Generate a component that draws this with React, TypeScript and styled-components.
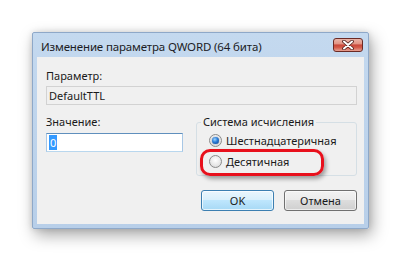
import styled, { createGlobalStyle } from "styled-components"

const GlobalStyle = createGlobalStyle`
    html, body {
        margin: 0;
        background: #ffffff;
    }
    body {
        font-family: "Noto Sans", "DejaVu Sans", sans-serif;
        color: #1a1a1a;
    }
`

const Page = styled.div`
    width: 401px;
    height: 261px;
    padding: 32px 0 0 32px;
    box-sizing: border-box;
    overflow: hidden;
`

const Window = styled.div`
    width: 337px;
    box-sizing: border-box;
    border: 1px solid #8ea8c8;
    border-radius: 2px;
    background: linear-gradient(#c4d9ef, #b8cfe9);
    padding: 0 4px 4px 4px;
    box-shadow: 3px 6px 16px rgba(0, 0, 0, 0.35), 0 0 6px rgba(0, 0, 0, 0.12);
`

const TitleBar = styled.div`
    height: 24px;
    display: flex;
    align-items: center;
    justify-content: space-between;
    padding-left: 4px;
`

const Title = styled.span`
    font-size: 11.5px;
    letter-spacing: -0.15px;
    padding-top: 3px;
    color: #1c1c24;
`

const CloseButton = styled.div`
    width: 30px;
    height: 14px;
    margin-right: 1px;
    box-sizing: border-box;
    border: 1px solid #6b2a24;
    border-radius: 3px;
    background: linear-gradient(#eab4a8 0%, #e29484 40%, #c9473a 50%, #d35a48 70%, #e7a193 100%);
    display: flex;
    align-items: center;
    justify-content: center;
`

const Client = styled.div`
    position: relative;
    height: 167px;
    box-sizing: border-box;
    background: #f0f0f0;
    padding: 11px 7px 0 9px;
    font-size: 11px;
`

const Label = styled.div`
    line-height: 16px;
    height: 16px;
`

const Field = styled.div<{ $readOnly?: boolean }>`
    height: 19px;
    box-sizing: border-box;
    border: 1px solid;
    border-color: ${p => p.$readOnly ? "#d2d2d2" : "#5f8fbd #a8c7e5 #b9d7ee #a8c7e5"};
    background: ${p => p.$readOnly ? "#f0f0f0" : "#ffffff"};
    display: flex;
    align-items: center;
    padding-left: 2px;
    margin-top: ${p => p.$readOnly ? "2px" : "3px"};
`

const Selected = styled.span`
    background: #3399ff;
    color: #ffffff;
    padding: 0 1px;
    line-height: 15px;
`

const Row = styled.div`
    display: flex;
    align-items: flex-start;
    margin-top: 9px;
`

const ValueColumn = styled.div`
    width: 137px;
`

const Group = styled.fieldset`
    margin: 0 0 0 13px;
    width: 161px;
    box-sizing: border-box;
    border: 1px solid #d5dfe5;
    border-radius: 3px;
    padding: 0 6px 3px 12px;
`

const Legend = styled.legend`
    margin-left: -8px;
    padding: 0 2px;
    line-height: 16px;
`

const RadioRow = styled.div`
    height: 21px;
    display: flex;
    align-items: center;
    gap: 4px;
`

const Radio = styled.span<{ $checked?: boolean }>`
    width: 13px;
    height: 13px;
    box-sizing: border-box;
    border-radius: 50%;
    border: 1px solid #8b8b8b;
    background: radial-gradient(circle at 50% 40%, #ffffff 0%, #e6e6e6 60%, #cfcfcf 100%);
    display: flex;
    align-items: center;
    justify-content: center;

    &::after {
        content: "";
        display: ${p => p.$checked ? "block" : "none"};
        width: 7px;
        height: 7px;
        border-radius: 50%;
        background: radial-gradient(circle at 40% 35%, #9bd4ff 0%, #2a7bd6 45%, #0d3f8a 100%);
        box-shadow: 0 0 1px #0b3570;
    }
`

const Buttons = styled.div`
    display: flex;
    justify-content: flex-end;
    gap: 10px;
    margin-top: 14px;
`

const Button = styled.div<{ $primary?: boolean }>`
    width: 73px;
    height: 21px;
    box-sizing: border-box;
    border: 1px solid ${p => p.$primary ? "#3c7fb1" : "#707070"};
    border-radius: 3px;
    background: ${p => p.$primary
        ? "linear-gradient(#eaf6fd 0%, #d9f0fc 45%, #bee6fd 50%, #a7d9f5 100%)"
        : "linear-gradient(#f2f2f2 0%, #ebebeb 45%, #dddddd 50%, #cfcfcf 100%)"};
    box-shadow: inset 0 0 0 1px ${p => p.$primary ? "rgba(255,255,255,0.7)" : "rgba(255,255,255,0.6)"};
    display: flex;
    align-items: center;
    justify-content: center;
`

const Highlight = styled.div`
    position: absolute;
    left: 163px;
    top: 92px;
    width: 124px;
    height: 27px;
    box-sizing: border-box;
    border: 3.5px solid #e8101c;
    border-radius: 10px;
    box-shadow: 2px 3px 4px rgba(0, 0, 0, 0.35);
`

const App = () => {
    return (
        <Page>
            <GlobalStyle />
            <Window>
                <TitleBar>
                    <Title>Изменение параметра QWORD (64 бита)</Title>
                    <CloseButton>
                        <svg width="12" height="10" viewBox="0 0 12 10">
                            <path d="M2 1.5 L10 8.5 M10 1.5 L2 8.5" stroke="#4a1a16" strokeWidth="3.6" strokeLinecap="round" />
                            <path d="M2 1.5 L10 8.5 M10 1.5 L2 8.5" stroke="#ffffff" strokeWidth="2" strokeLinecap="round" />
                        </svg>
                    </CloseButton>
                </TitleBar>
                <Client>
                    <Label>Параметр:</Label>
                    <Field $readOnly>DefaultTTL</Field>
                    <Row>
                        <ValueColumn>
                            <Label>Значение:</Label>
                            <Field>
                                <Selected>0</Selected>
                            </Field>
                        </ValueColumn>
                        <Group>
                            <Legend>Система исчисления</Legend>
                            <RadioRow>
                                <Radio $checked />
                                Шестнадцатеричная
                            </RadioRow>
                            <RadioRow>
                                <Radio />
                                Десятичная
                            </RadioRow>
                        </Group>
                    </Row>
                    <Buttons>
                        <Button $primary>OK</Button>
                        <Button>Отмена</Button>
                    </Buttons>
                    <Highlight />
                </Client>
            </Window>
        </Page>
    )
}

export default App
